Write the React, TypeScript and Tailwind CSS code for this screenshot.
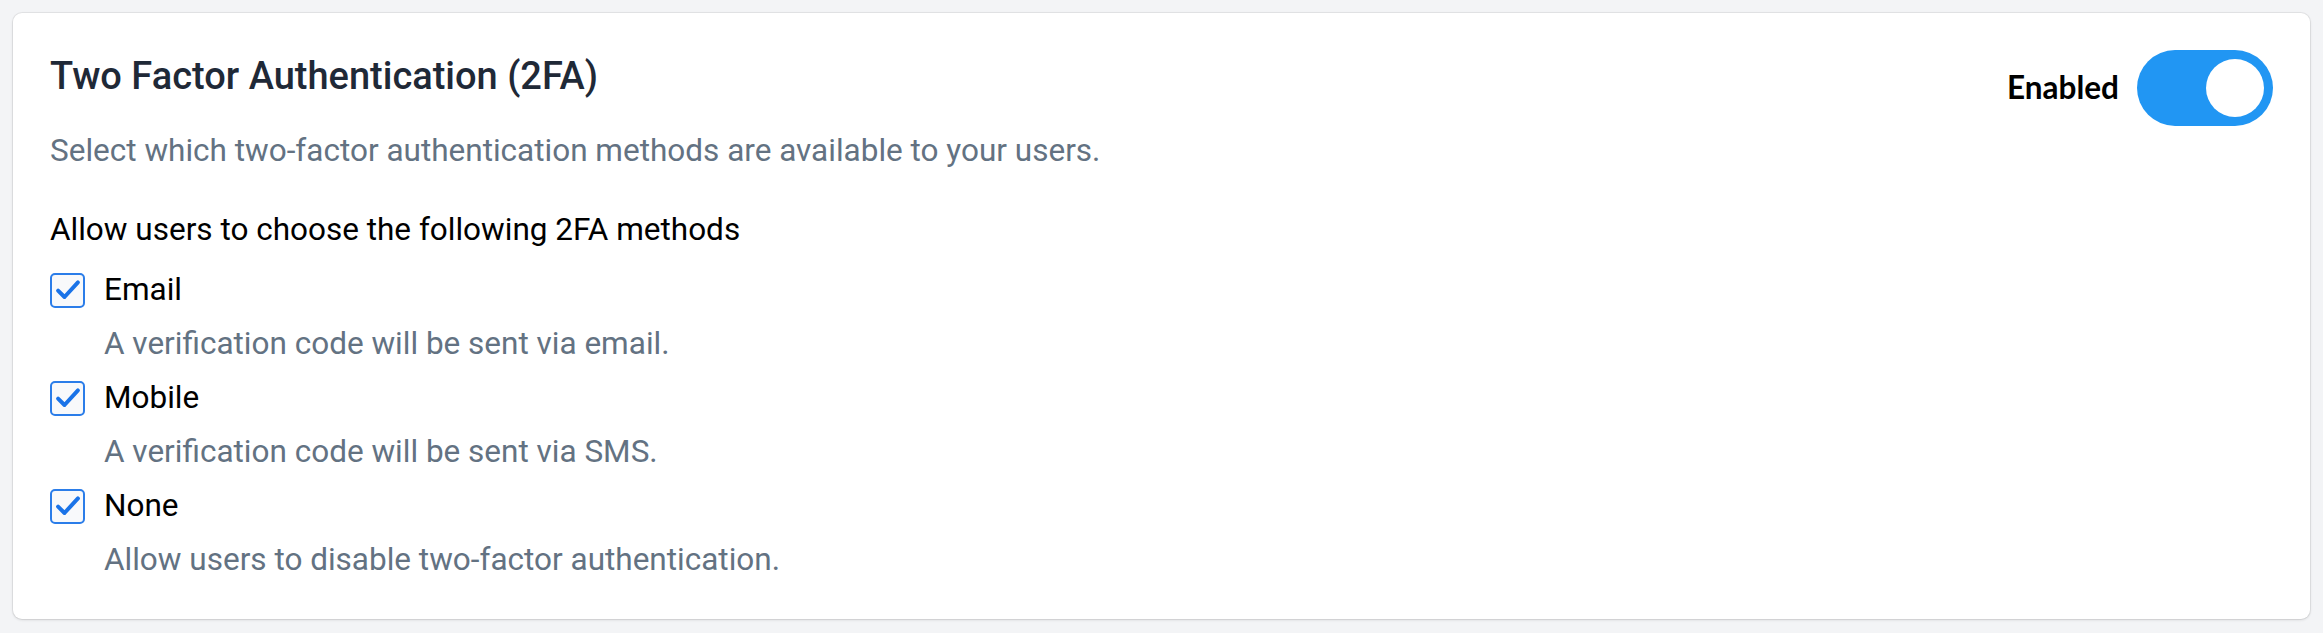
import React from "react";

const methods = [
  { label: "Email", desc: "A verification code will be sent via email." },
  { label: "Mobile", desc: "A verification code will be sent via SMS." },
  { label: "None", desc: "Allow users to disable two-factor authentication." },
];

const CheckBox: React.FC = () => (
  <span className="flex h-[35px] w-[35px] shrink-0 items-center justify-center rounded-[5px] border-2 border-[#2b7de9] bg-[#f8f9fb]">
    <svg viewBox="0 0 24 24" className="h-[28px] w-[28px]" fill="none">
      <path d="M3.5 12.5l5.5 5.5L20.5 5.5" stroke="#1a73e8" strokeWidth="3.4" strokeLinecap="round" strokeLinejoin="round" />
    </svg>
  </span>
);

const App: React.FC = () => {
  return (
    <div
      className="min-h-screen bg-[#f3f4f6] p-[13px]"
      style={{ fontFamily: "Roboto, 'Liberation Sans', sans-serif" }}
    >
      <div className="rounded-[9px] bg-white px-[37px] pt-[38px] pb-[41px] shadow-[0_0_0_1px_rgba(0,0,0,0.06),0_1px_3px_rgba(0,0,0,0.12)]">
        <div className="flex items-start justify-between">
          <div>
            <h1 className="text-[38px] leading-[50px] font-medium text-[#1f2937]">
              Two Factor Authentication (2FA)
            </h1>
            <p className="mt-[32px] text-[31.5px] leading-[36px] text-[#637282]">
              Select which two-factor authentication methods are available to your users.
            </p>
          </div>
          <div className="-mt-[1px] flex items-center gap-[18px]">
            <span className="text-[31.5px] font-bold text-black" style={{ fontFamily: "Lato, sans-serif" }}>
              Enabled
            </span>
            <button className="flex h-[76px] w-[136px] items-center justify-end rounded-full bg-[#2196f3] px-[9px]">
              <span className="h-[58px] w-[58px] rounded-full bg-white" />
            </button>
          </div>
        </div>

        <p className="mt-[43px] text-[31.5px] leading-[36px] text-black">
          Allow users to choose the following 2FA methods
        </p>

        <div className="mt-[24px] flex flex-col gap-[18px]">
          {methods.map((m) => (
            <div key={m.label} className="flex flex-col gap-[18px]">
              <label className="flex items-center gap-[19px] text-[31.5px] leading-[36px] text-black">
                <CheckBox />
                {m.label}
              </label>
              <p className="pl-[54px] text-[31.5px] leading-[36px] text-[#637282]">{m.desc}</p>
            </div>
          ))}
        </div>
      </div>
    </div>
  );
};

export default App;
